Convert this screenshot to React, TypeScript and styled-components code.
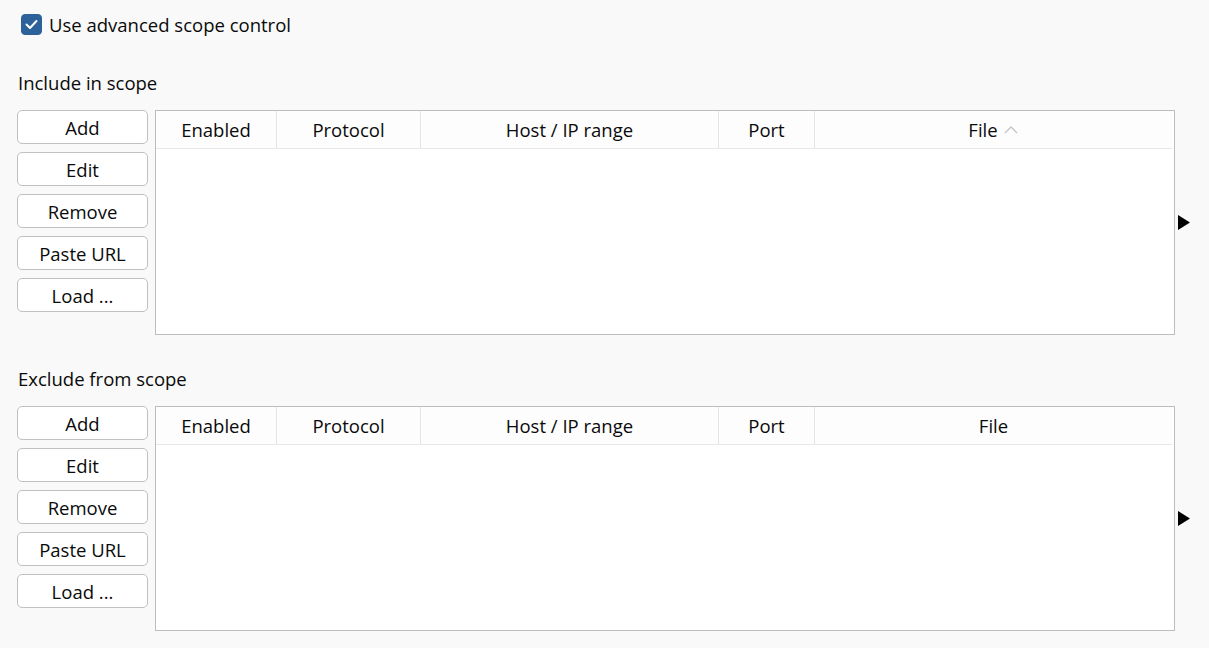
import React, { useState } from 'react';
import styled, { createGlobalStyle } from 'styled-components';

const GlobalStyle = createGlobalStyle`
  html, body {
    margin: 0;
    padding: 0;
    background: #f9f9f9;
  }
  body {
    font-family: 'Open Sans', 'Noto Sans', 'Noto Sans CJK SC', sans-serif;
    font-size: 18.5px;
    color: #0a0a0a;
  }
`;

const Page = styled.div`
  width: 1209px;
  height: 648px;
  box-sizing: border-box;
  padding: 13px 0 0 17px;
  background: #f9f9f9;
  overflow: hidden;
`;

const CheckRow = styled.label`
  display: flex;
  align-items: center;
  gap: 7px;
  height: 22px;
  padding-left: 4px;
  cursor: pointer;
  user-select: none;
`;

const CheckBox = styled.span<{ checked: boolean }>`
  display: inline-flex;
  align-items: center;
  justify-content: center;
  width: 21px;
  height: 21px;
  box-sizing: border-box;
  border-radius: 4px;
  background: ${p => (p.checked ? '#2d6199' : '#fff')};
  border: 1px solid ${p => (p.checked ? '#2d6199' : '#b9b9b9')};
`;

const Section = styled.section<{ top: number }>`
  margin-top: ${p => p.top}px;
`;

const Title = styled.div`
  height: 24px;
  line-height: 24px;
  padding-left: 1px;
  margin-bottom: 15px;
`;

const Body = styled.div`
  display: flex;
  align-items: stretch;
`;

const Buttons = styled.div`
  display: flex;
  flex-direction: column;
  gap: 8px;
  width: 131px;
  margin-right: 7px;
`;

const Button = styled.button`
  height: 34px;
  box-sizing: border-box;
  border: 1px solid #c3bfbf;
  border-radius: 5px;
  background: #fff;
  font: inherit;
  color: #0a0a0a;
  padding: 0;
  cursor: pointer;
`;

const Table = styled.div`
  width: 1020px;
  height: 225px;
  box-sizing: border-box;
  border: 1px solid #bfbcbc;
  background: #fff;
`;

const Header = styled.div`
  display: grid;
  grid-template-columns: 121px 144px 298px 96px 1fr;
  height: 38px;
  margin-right: 2px;
  box-sizing: border-box;
  border-bottom: 1px solid #e8e8e8;
  background: #fdfdfd;
`;

const HeaderCell = styled.div<{ last?: boolean }>`
  display: flex;
  align-items: center;
  justify-content: center;
  border-right: ${p => (p.last ? 'none' : '1px solid #e4e4e4')};
  gap: 5px;
`;

const SortIcon = styled.svg`
  width: 16px;
  height: 10px;
`;

const ArrowCol = styled.div`
  display: flex;
  align-items: center;
  padding-left: 3px;
`;

const Arrow = styled.svg`
  width: 12px;
  height: 15px;
`;

const columns = ['Enabled', 'Protocol', 'Host / IP range', 'Port', 'File'];
const actions = ['Add', 'Edit', 'Remove', 'Paste URL', 'Load ...'];

function ScopeTable({ sorted }: { sorted?: boolean }) {
  return (
    <Table>
      <Header>
        {columns.map((c, i) => (
          <HeaderCell key={c} last={i === columns.length - 1}>
            {c}
            {sorted && c === 'File' && (
              <SortIcon viewBox="0 0 16 10">
                <path d="M2 8 L8 2 L14 8" fill="none" stroke="#c4c4c4" strokeWidth="1.3" />
              </SortIcon>
            )}
          </HeaderCell>
        ))}
      </Header>
    </Table>
  );
}

function ScopeSection({ title, top, sorted }: { title: string; top: number; sorted?: boolean }) {
  return (
    <Section top={top}>
      <Title>{title}</Title>
      <Body>
        <Buttons>
          {actions.map(a => (
            <Button key={a}>{a}</Button>
          ))}
        </Buttons>
        <ScopeTable sorted={sorted} />
        <ArrowCol>
          <Arrow viewBox="0 0 12 15">
            <path d="M0 0 L12 7.5 L0 15 Z" fill="#000" />
          </Arrow>
        </ArrowCol>
      </Body>
    </Section>
  );
}

export default function App() {
  const [checked, setChecked] = useState(true);
  return (
    <Page>
      <GlobalStyle />
      <CheckRow onClick={() => setChecked(!checked)}>
        <CheckBox checked={checked}>
          {checked && (
            <svg width="13" height="11" viewBox="0 0 13 11">
              <path d="M1.5 5.5 L5 9 L11.5 2" fill="none" stroke="#fff" strokeWidth="2" strokeLinecap="round" strokeLinejoin="round" />
            </svg>
          )}
        </CheckBox>
        Use advanced scope control
      </CheckRow>
      <ScopeSection title="Include in scope" top={36} sorted />
      <ScopeSection title="Exclude from scope" top={32} />
    </Page>
  );
}
